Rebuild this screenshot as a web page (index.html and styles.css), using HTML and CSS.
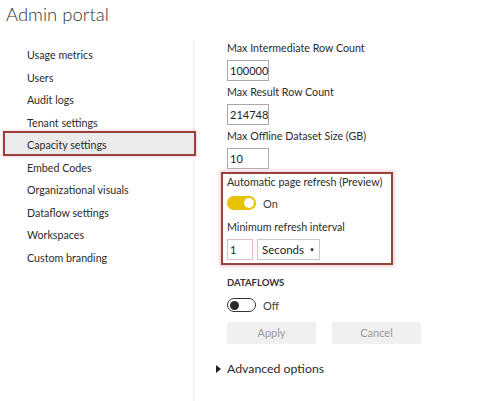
FILE: index.html
```html
<!DOCTYPE html>
<html>
<head>
<meta charset="utf-8">
<link rel="stylesheet" href="styles.css">
</head>
<body>
<h1 class="title">Admin portal</h1>
<div class="layout">
  <nav class="sidebar">
    <div class="nav-item">Usage metrics</div>
    <div class="nav-item">Users</div>
    <div class="nav-item">Audit logs</div>
    <div class="nav-item">Tenant settings</div>
    <div class="nav-item active">Capacity settings</div>
    <div class="nav-item">Embed Codes</div>
    <div class="nav-item">Organizational visuals</div>
    <div class="nav-item">Dataflow settings</div>
    <div class="nav-item">Workspaces</div>
    <div class="nav-item">Custom branding</div>
  </nav>
  <main class="content">
    <div class="field">
      <div class="label">Max Intermediate Row Count</div>
      <div class="input">100000</div>
    </div>
    <div class="field">
      <div class="label">Max Result Row Count</div>
      <div class="input">214748</div>
    </div>
    <div class="field">
      <div class="label">Max Offline Dataset Size (GB)</div>
      <div class="input">10</div>
    </div>
    <div class="highlight">
      <div class="label">Automatic page refresh (Preview)</div>
      <div class="toggle-row">
        <span class="toggle on"><span class="knob"></span></span>
        <span class="toggle-text">On</span>
      </div>
      <div class="label">Minimum refresh interval</div>
      <div class="interval-row">
        <div class="input small">1</div>
        <div class="select">Seconds <span class="caret">&#9660;</span></div>
      </div>
    </div>
    <div class="section-title">DATAFLOWS</div>
    <div class="toggle-row">
      <span class="toggle off"><span class="knob"></span></span>
      <span class="toggle-text">Off</span>
    </div>
    <div class="buttons">
      <div class="btn">Apply</div>
      <div class="btn">Cancel</div>
    </div>
    <div class="advanced"><span class="tri"></span>Advanced options</div>
  </main>
</div>
</body>
</html>
```
FILE: styles.css
```css
* { box-sizing: border-box; }
html, body { margin: 0; padding: 0; background: #fff; }
body {
  font-family: Lato, "Noto Sans", sans-serif;
  color: #2b2b2b;
  width: 500px;
  height: 401px;
  overflow: hidden;
}
.title {
  margin: 0;
  height: 40px;
  padding: 0 0 0 6px;
  font-family: Lato, "Noto Sans", sans-serif;
  font-weight: 300;
  font-size: 18.5px;
  line-height: 28px;
  color: #333;
}
.layout {
  display: flex;
  align-items: flex-start;
}
.sidebar {
  width: 194px;
  flex: none;
  border-right: 1px solid #ececec;
  padding-top: 4px;
  min-height: 361px;
  display: flex;
  flex-direction: column;
}
.nav-item {
  font-size: 10.7px;
  line-height: 22.5px;
  height: 22.5px;
  padding-left: 27px;
  color: #2b2b2b;
  white-space: nowrap;
}
.nav-item.active {
  background: #ebebeb;
  border: 2px solid #9a4237;
  box-shadow: 0 0 2px 1px #f6d3df;
  height: 25px;
  line-height: 16px;
  padding: 4.5px 0 0.5px 22px;
  margin: -3.5px -3px 1px 3px;
}
.content {
  padding-left: 33px;
  flex: 1;
}
.field { margin-bottom: 3px; }
.label {
  font-size: 10.7px;
  line-height: 16px;
  height: 16px;
  margin-bottom: 4px;
  color: #2b2b2b;
  white-space: nowrap;
}
.input {
  width: 42px;
  height: 21px;
  border: 1px solid #a9a9a9;
  font-size: 11px;
  line-height: 19px;
  padding-left: 2px;
  color: #222;
}
.highlight {
  margin: 2px 0 0 -6px;
  width: 172px;
  border: 2px solid #94453a;
  box-shadow: 0 0 3px 2px #f8d6e2;
  padding: 0 0 3px 4px;
}
.highlight .label:first-child { margin-bottom: 6px; }
.toggle-row {
  display: flex;
  align-items: center;
  height: 14px;
  margin-bottom: 8px;
}
.toggle {
  width: 29px;
  height: 14px;
  border-radius: 7px;
  display: flex;
  align-items: center;
  padding: 0 2px;
}
.toggle.on { background: #e6c200; justify-content: flex-end; }
.toggle.on .knob { width: 10px; height: 10px; border-radius: 50%; background: #fff; }
.toggle.off { border: 1px solid #333; background: #fff; justify-content: flex-start; padding: 0 2px; }
.toggle.off .knob { width: 9px; height: 9px; border-radius: 50%; background: #2b2b2b; }
.toggle-text { margin-left: 7px; font-size: 11px; color: #444; }
.highlight .toggle-row { margin-bottom: 9px; }
.interval-row { display: flex; gap: 4px; }
.input.small { width: 26px; border-color: #e3b9c4; }
.select {
  width: 63px;
  height: 21px;
  border: 1px solid #c8c8c8;
  font-size: 11.5px;
  line-height: 19px;
  padding-left: 4px;
  color: #222;
  white-space: nowrap;
}
.caret { font-size: 6px; vertical-align: 2px; margin-left: 2px; }
.section-title {
  margin-top: 11px;
  font-size: 9.5px;
  font-weight: bold;
  line-height: 14px;
  height: 14px;
  margin-bottom: 8px;
  color: #333;
}
.buttons { display: flex; gap: 16px; margin-top: 10px; }
.btn {
  width: 89px;
  height: 22px;
  background: #f0f0f0;
  color: #9a9a9a;
  font-size: 11px;
  line-height: 22px;
  text-align: center;
}
.advanced {
  margin-top: 16px;
  margin-left: -11px;
  font-size: 12.3px;
  line-height: 18px;
  color: #2b2b2b;
  display: flex;
  align-items: center;
}
.tri {
  width: 0; height: 0;
  border-top: 4px solid transparent;
  border-bottom: 4px solid transparent;
  border-left: 5px solid #222;
  margin-right: 6px;
}
```
